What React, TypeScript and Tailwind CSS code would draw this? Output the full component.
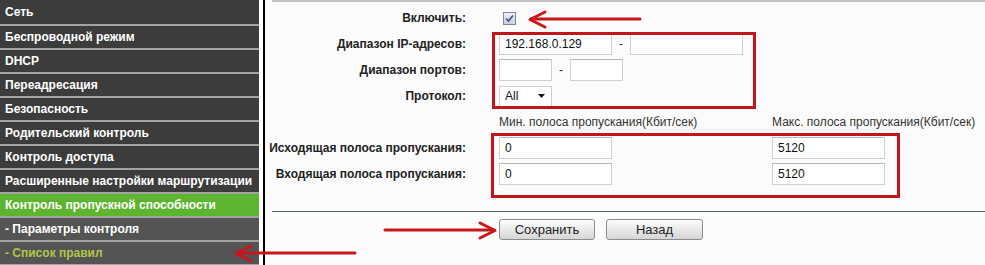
import React from "react";

const menu = [
  { label: "Сеть", kind: "main" },
  { label: "Беспроводной режим", kind: "main" },
  { label: "DHCP", kind: "main" },
  { label: "Переадресация", kind: "main" },
  { label: "Безопасность", kind: "main" },
  { label: "Родительский контроль", kind: "main" },
  { label: "Контроль доступа", kind: "main" },
  { label: "Расширенные настройки маршрутизации", kind: "main" },
  { label: "Контроль пропускной способности", kind: "active" },
  { label: "- Параметры контроля", kind: "sub" },
  { label: "- Список правил", kind: "current" },
];

function MenuItem({ label, kind, first }: { label: string; kind: string; first: boolean }) {
  const bg =
    kind === "active" ? "bg-[#5db52f]" : kind === "main" ? "bg-[#3c3c3c]" : "bg-[#545454]";
  const color = kind === "current" ? "text-[#b0c848]" : "text-white";
  return (
    <div
      className={`${first ? "h-[24px]" : "h-[22px]"} ${bg} ${color} flex items-center px-[5px] text-[12px] font-bold whitespace-nowrap`}
    >
      {label}
    </div>
  );
}

function Field({ w, value }: { w: string; value?: string }) {
  return (
    <div
      className={`${w} h-[22px] bg-white border border-[#cfcfcf] border-t-[#b5b5b5] flex items-center px-[5px] text-[12px] text-[#111]`}
    >
      {value}
    </div>
  );
}

function Row({ label, children }: { label?: string; children: React.ReactNode }) {
  return (
    <div className="flex h-[26px] items-center">
      <div className="w-[201px] text-right text-[12px] font-bold text-[#222] whitespace-nowrap">
        {label}
      </div>
      <div className="ml-[33px] flex items-center">{children}</div>
    </div>
  );
}

function Dash() {
  return <span className="mx-[7px] text-[12px] text-[#333]">-</span>;
}

export default function App() {
  return (
    <div className="relative w-[985px] h-[265px] overflow-hidden flex bg-white font-['Liberation_Sans',Arial,sans-serif]">
      <nav className="w-[259px] flex flex-col gap-[2px] bg-[#a3a3a3]">
        {menu.map((m, i) => (
          <MenuItem key={m.label} label={m.label} kind={m.kind} first={i === 0} />
        ))}
      </nav>
      <div className="w-[4px]" />
      <div className="w-[2px] bg-black" />

      <main className="flex-1 bg-[#fbfbfb] flex flex-col">
        <div className="ml-[7px] h-[2px] bg-[#c4c4c4]" />
        <div className="h-[2px]" />
        <div className="ml-[7px] h-px bg-[#eef6f6]" />

        <Row label="Включить:">
          <span className="ml-[4px] w-[13px] h-[13px] border border-[#7d8694] bg-gradient-to-b from-[#eef1f6] to-[#c9d0db] flex items-center justify-center">
            <svg width="9" height="9" viewBox="0 0 9 9">
              <path d="M1 4.5 L3.5 7 L8 1.5" fill="none" stroke="#3d4c78" strokeWidth="1.6" />
            </svg>
          </span>
        </Row>
        <Row label="Диапазон IP-адресов:">
          <Field w="w-[113px]" value="192.168.0.129" />
          <Dash />
          <Field w="w-[113px]" />
        </Row>
        <Row label="Диапазон портов:">
          <Field w="w-[53px]" />
          <Dash />
          <Field w="w-[53px]" />
        </Row>
        <Row label="Протокол:">
          <div className="w-[53px] h-[21px] bg-white border border-[#cfcfcf] flex items-center justify-between pl-[5px] pr-[6px] text-[12px] text-[#111]">
            <span>All</span>
            <svg width="7" height="4" viewBox="0 0 7 4">
              <path d="M0 0 H7 L3.5 4 Z" fill="#111" />
            </svg>
          </div>
        </Row>
        <Row>
          <span className="w-[273px] text-[12px] text-[#333] whitespace-nowrap">
            Мин. полоса пропускания(Кбит/сек)
          </span>
          <span className="text-[12px] text-[#333] whitespace-nowrap">
            Макс. полоса пропускания(Кбит/сек)
          </span>
        </Row>
        <Row label="Исходящая полоса пропускания:">
          <Field w="w-[113px]" value="0" />
          <div className="w-[160px]" />
          <Field w="w-[113px]" value="5120" />
        </Row>
        <Row label="Входящая полоса пропускания:">
          <Field w="w-[113px]" value="0" />
          <div className="w-[160px]" />
          <Field w="w-[113px]" value="5120" />
        </Row>

        <div className="h-[24px]" />
        <div className="ml-[7px] h-px bg-[#3f6c5d]" />
        <div className="mt-[7px] ml-[234px] flex gap-[11px]">
          <button className="w-[96px] h-[21px] rounded-[3px] border border-[#8c8c8c] bg-gradient-to-b from-[#fdfdfd] to-[#d6d6d6] text-[13px] text-[#222]">
            Сохранить
          </button>
          <button className="w-[97px] h-[21px] rounded-[3px] border border-[#8c8c8c] bg-gradient-to-b from-[#fdfdfd] to-[#d6d6d6] text-[13px] text-[#222]">
            Назад
          </button>
        </div>
      </main>

      {/* red annotation boxes */}
      <div className="absolute left-[492px] top-[32px] w-[264px] h-[77px] border-[3px] border-[#c3161c] pointer-events-none" />
      <div className="absolute left-[491px] top-[133px] w-[409px] h-[65px] border-[3px] border-[#c3161c] pointer-events-none" />

      {/* red arrows */}
      <svg className="absolute left-0 top-0 pointer-events-none" width="985" height="265">
        <g fill="none" stroke="#c8161d" strokeWidth="3" strokeLinecap="round" strokeLinejoin="round">
          <path d="M640 19 H531" />
          <path d="M545 12 L530 19.5 L545 27" />
          <path d="M385 230 H494" />
          <path d="M480 223 L495 230.5 L480 238" />
          <path d="M355 253 H238" />
          <path d="M251 246 L236 253.5 L251 261" />
        </g>
      </svg>
    </div>
  );
}
